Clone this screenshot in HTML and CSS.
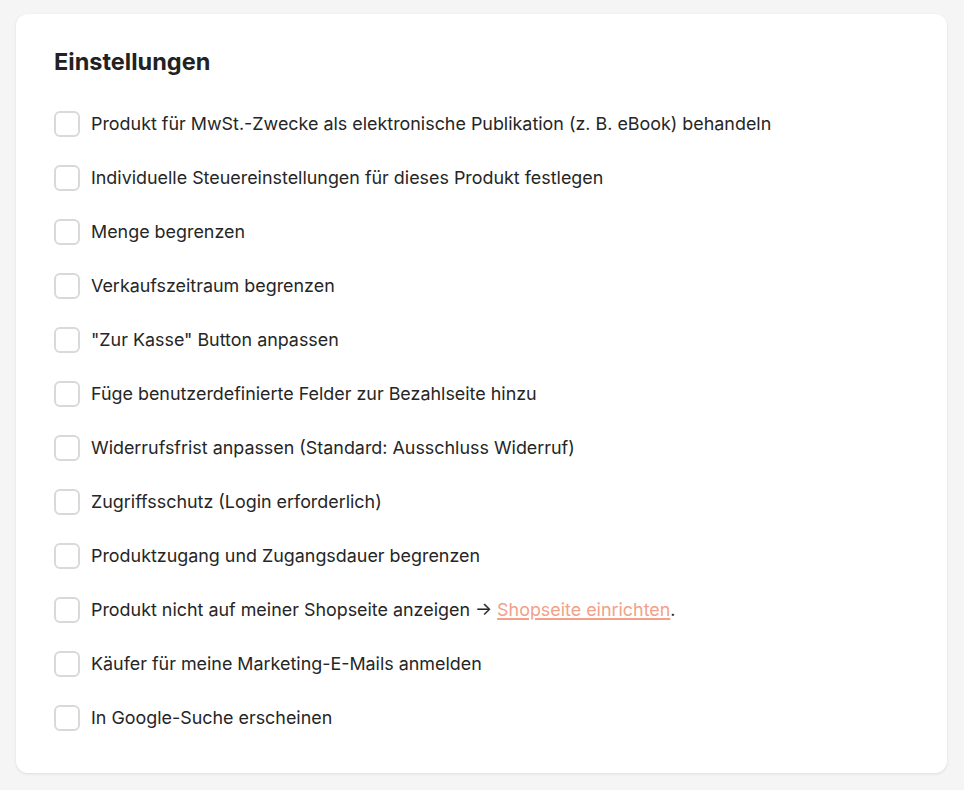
FILE: index.html
```html
<!DOCTYPE html>
<html lang="de">
<head>
<meta charset="utf-8">
<link rel="stylesheet" href="styles.css">
</head>
<body>
<div class="card">
  <h2 class="title">Einstellungen</h2>
  <ul class="list">
    <li class="row"><span class="box"></span><span class="label">Produkt für MwSt.-Zwecke als elektronische Publikation (z. B. eBook) behandeln</span></li>
    <li class="row"><span class="box"></span><span class="label">Individuelle Steuereinstellungen für dieses Produkt festlegen</span></li>
    <li class="row"><span class="box"></span><span class="label">Menge begrenzen</span></li>
    <li class="row"><span class="box"></span><span class="label">Verkaufszeitraum begrenzen</span></li>
    <li class="row"><span class="box"></span><span class="label">"Zur Kasse" Button anpassen</span></li>
    <li class="row"><span class="box"></span><span class="label">Füge benutzerdefinierte Felder zur Bezahlseite hinzu</span></li>
    <li class="row"><span class="box"></span><span class="label">Widerrufsfrist anpassen (Standard: Ausschluss Widerruf)</span></li>
    <li class="row"><span class="box"></span><span class="label">Zugriffsschutz (Login erforderlich)</span></li>
    <li class="row"><span class="box"></span><span class="label">Produktzugang und Zugangsdauer begrenzen</span></li>
    <li class="row"><span class="box"></span><span class="label">Produkt nicht auf meiner Shopseite anzeigen → <a class="link" href="#">Shopseite einrichten</a>.</span></li>
    <li class="row"><span class="box"></span><span class="label">Käufer für meine Marketing-E-Mails anmelden</span></li>
    <li class="row"><span class="box"></span><span class="label">In Google-Suche erscheinen</span></li>
  </ul>
</div>
</body>
</html>
```
FILE: styles.css
```css
html, body {
  margin: 0;
  padding: 0;
  background: #f5f5f5;
}
body {
  padding: 14px 17px 17px 16px;
  font-family: Inter, "Noto Sans", sans-serif;
  color: #222;
}
.card {
  background: #fff;
  border-radius: 12px;
  box-shadow: 0 1px 3px rgba(0,0,0,0.10);
  padding: 34px 38px 41px 38px;
  height: 759px;
  box-sizing: border-box;
}
.title {
  margin: 0 0 35px 0;
  font-size: 23.5px;
  font-weight: 700;
  line-height: 28px;
  color: #222;
}
.list {
  list-style: none;
  margin: 0;
  padding: 0;
  display: flex;
  flex-direction: column;
  gap: 28px;
}
.row {
  display: flex;
  align-items: center;
  gap: 11px;
  height: 26px;
}
.box {
  width: 26px;
  height: 26px;
  box-sizing: border-box;
  border: 2px solid #d9d9d9;
  border-radius: 6px;
  flex: none;
}
.label {
  font-size: 17.9px;
  line-height: 24px;
  color: #262626;
}
.link {
  color: #f4a088;
  text-decoration: underline;
  text-decoration-thickness: 1.5px;
  text-underline-offset: 2px;
}
```
